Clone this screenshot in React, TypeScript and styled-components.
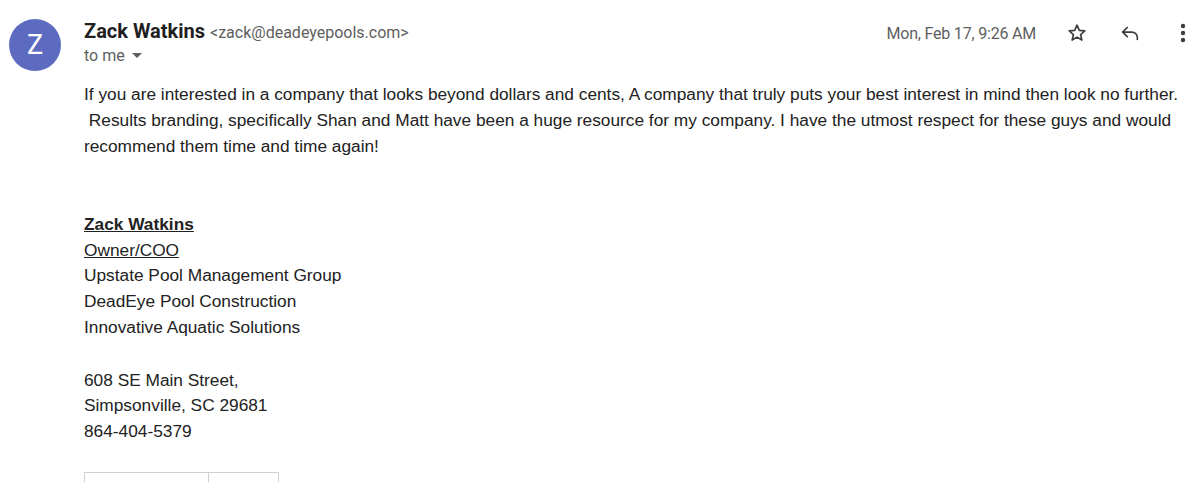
import React from "react";
import styled, { createGlobalStyle } from "styled-components";

const Global = createGlobalStyle`
  html, body { margin: 0; padding: 0; background: #fff; }
  body { font-family: "Liberation Sans", Arial, sans-serif; overflow: hidden; }
`;

const Page = styled.div`
  width: 1200px;
  height: 482px;
  overflow: hidden;
  display: grid;
  grid-template-columns: 84px 1fr;
  padding-top: 19px;
  box-sizing: border-box;
`;

const AvatarCol = styled.div`
  display: flex;
  justify-content: flex-end;
  padding-right: 23px;
`;

const Avatar = styled.div`
  width: 52px;
  height: 52px;
  border-radius: 50%;
  background: #5c6bc0;
  color: #fff;
  display: flex;
  align-items: center;
  justify-content: center;
  font-family: Roboto, "Liberation Sans", sans-serif;
  font-size: 27px;
`;

const Main = styled.div`
  display: flex;
  flex-direction: column;
  padding-right: 4px;
`;

const Header = styled.div`
  display: flex;
  justify-content: space-between;
  align-items: flex-start;
`;

const Sender = styled.div`
  display: flex;
  flex-direction: column;
`;

const NameRow = styled.div`
  display: flex;
  align-items: baseline;
  gap: 5px;
`;

const Name = styled.span`
  font-family: Roboto, "Liberation Sans", sans-serif;
  font-weight: 700;
  font-size: 20px;
  color: #1f1f1f;
`;

const Email = styled.span`
  font-family: Roboto, "Liberation Sans", sans-serif;
  font-size: 16px;
  color: #5e5e5e;
`;

const ToMe = styled.div`
  display: flex;
  align-items: center;
  gap: 7px;
  margin-top: 3px;
  font-family: Roboto, "Liberation Sans", sans-serif;
  font-size: 16px;
  color: #5e5e5e;
`;

const Caret = styled.span`
  width: 0;
  height: 0;
  border-left: 5px solid transparent;
  border-right: 5px solid transparent;
  border-top: 5px solid #5e5e5e;
`;

const Meta = styled.div`
  display: flex;
  align-items: center;
  margin-top: 3px;
`;

const DateText = styled.span`
  font-family: Roboto, "Liberation Sans", sans-serif;
  font-size: 16px;
  color: #5e5e5e;
  margin-right: 28px;
  letter-spacing: -0.2px;
`;

const IconBtn = styled.span<{ $w: number }>`
  width: ${(p) => p.$w}px;
  display: flex;
  justify-content: center;
  align-items: center;
`;

const Body = styled.div`
  margin-top: 16px;
  font-family: "Liberation Sans", Arial, sans-serif;
  font-size: 17.3px;
  line-height: 26px;
  color: #222;
`;

const Para = styled.p`
  margin: 0;
`;

const Signature = styled.div`
  margin-top: 53px;
  display: flex;
  flex-direction: column;
  line-height: 25.7px;
`;

const Bold = styled.span`
  font-weight: 700;
  text-decoration: underline;
`;

const Under = styled.span`
  text-decoration: underline;
`;

const Gap = styled.div`
  height: 27px;
`;

const Boxes = styled.div`
  display: flex;
  margin-top: 27px;
`;

const Box = styled.div<{ $w: number }>`
  width: ${(p) => p.$w}px;
  height: 40px;
  border: 1px solid #d0d0d0;
  box-sizing: border-box;
  & + & { border-left: none; }
`;

export default function App() {
  return (
    <>
      <Global />
      <Page>
        <AvatarCol>
          <Avatar>Z</Avatar>
        </AvatarCol>
        <Main>
          <Header>
            <Sender>
              <NameRow>
                <Name>Zack Watkins</Name>
                <Email>&lt;zack@deadeyepools.com&gt;</Email>
              </NameRow>
              <ToMe>
                to me <Caret />
              </ToMe>
            </Sender>
            <Meta>
              <DateText>Mon, Feb 17, 9:26 AM</DateText>
              <IconBtn $w={26}>
                <svg width="22" height="22" viewBox="0 0 24 24" fill="none" stroke="#3c3c3c" strokeWidth="1.8" strokeLinejoin="round">
                  <path d="M12 3.5l2.5 5.6 6 .6-4.6 4 1.4 6-5.3-3.2-5.3 3.2 1.4-6-4.6-4 6-.6z" />
                </svg>
              </IconBtn>
              <IconBtn $w={80}>
                <svg width="22" height="22" viewBox="0 0 24 24" fill="none" stroke="#3c3c3c" strokeWidth="1.8" strokeLinecap="round" strokeLinejoin="round">
                  <path d="M9 6L4 11l5 5" />
                  <path d="M4 11h10a6 6 0 0 1 6 6v2" />
                </svg>
              </IconBtn>
              <IconBtn $w={26}>
                <svg width="6" height="20" viewBox="0 0 6 20" fill="#3c3c3c">
                  <circle cx="3" cy="3" r="2.2" />
                  <circle cx="3" cy="10" r="2.2" />
                  <circle cx="3" cy="17" r="2.2" />
                </svg>
              </IconBtn>
            </Meta>
          </Header>
          <Body>
            <Para>
              If you are interested in a company that looks beyond dollars and cents, A company that truly puts your best interest in mind then look no further.
              &nbsp;Results branding, specifically Shan and Matt have been a huge resource for my company. I have the utmost respect for these guys and would recommend them time and time again!
            </Para>
            <Signature>
              <div><Bold>Zack Watkins</Bold></div>
              <div><Under>Owner/COO</Under></div>
              <div>Upstate Pool Management Group</div>
              <div>DeadEye Pool Construction</div>
              <div>Innovative Aquatic Solutions</div>
              <Gap />
              <div>608 SE Main Street,</div>
              <div>Simpsonville, SC 29681</div>
              <div>864-404-5379</div>
            </Signature>
            <Boxes>
              <Box $w={125} />
              <Box $w={70} />
            </Boxes>
          </Body>
        </Main>
      </Page>
    </>
  );
}
